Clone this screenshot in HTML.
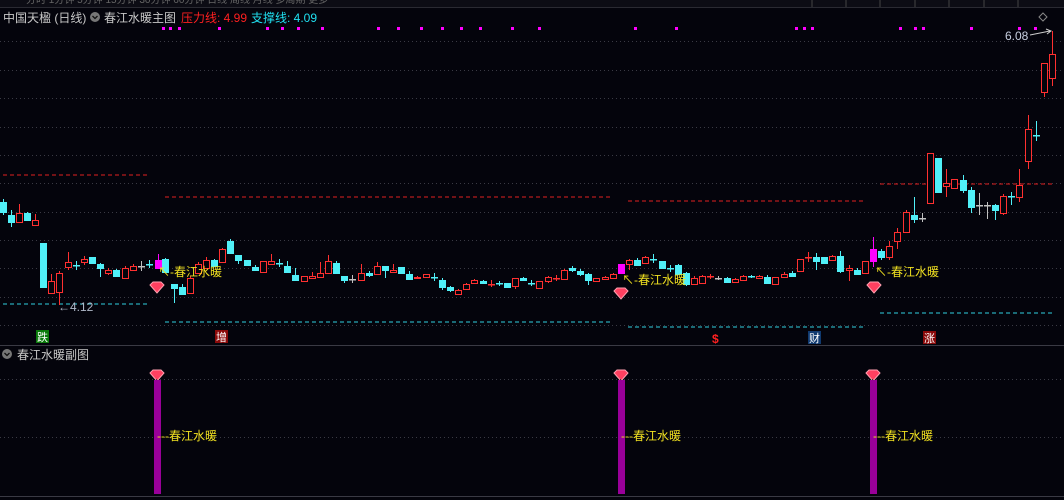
<!DOCTYPE html>
<html><head><meta charset="utf-8"><style>
body{margin:0;background:#04040c;width:1064px;height:500px;overflow:hidden;font-family:"Liberation Sans","Noto Sans CJK SC",sans-serif}
svg{position:absolute;left:0;top:0}
</style></head><body>
<svg id="s" width="1064" height="500" xmlns="http://www.w3.org/2000/svg" font-family="Liberation Sans, Noto Sans CJK SC, sans-serif">
<rect width="1064" height="500" fill="#04040c"/>
<!-- toolbar -->
<rect x="0" y="0" width="1064" height="7" fill="#0c0c14"/>
<line x1="0" y1="7.5" x2="1064" y2="7.5" stroke="#2a2a32"/>
<g fill="#666" font-size="10">
<text x="26" y="3">分时 1分钟 5分钟 15分钟 30分钟 60分钟 日线 周线 月线 多周期 更多</text>
</g>
<g stroke="#444"><line x1="812" y1="0" x2="812" y2="7"/><line x1="846" y1="0" x2="846" y2="7"/><line x1="880" y1="0" x2="880" y2="7"/><line x1="915" y1="0" x2="915" y2="7"/><line x1="949" y1="0" x2="949" y2="7"/><line x1="984" y1="0" x2="984" y2="7"/><line x1="1018" y1="0" x2="1018" y2="7"/></g>
<!-- header -->
<text x="3" y="22" font-size="12" fill="#c8c8c8">中国天楹 (日线)</text>
<circle cx="95" cy="17" r="5" fill="#777"/><path d="M92.5 16 L95 18.5 L97.5 16" stroke="#111" fill="none" stroke-width="1.3"/>
<text x="104" y="22" font-size="12" fill="#c8c8c8">春江水暖主图</text>
<text x="181" y="22" font-size="12" fill="#ff2020">压力线: 4.99</text>
<text x="251" y="22" font-size="12" fill="#20e0f0">支撑线: 4.09</text>
<path d="M1043 13 L1047 17 L1043 21 L1039 17 Z" stroke="#888" fill="none"/>
<g id="grid" stroke="#3a3a44" stroke-dasharray="1 3"></g>
<!-- level lines -->
<g stroke="#e02020" stroke-dasharray="4 3" stroke-width="1">
<line x1="3" y1="175" x2="150" y2="175"/><line x1="165" y1="197" x2="612" y2="197"/><line x1="628" y1="201" x2="865" y2="201"/><line x1="880" y1="184" x2="1052" y2="184"/></g>
<g stroke="#30d0e0" stroke-dasharray="4 3" stroke-width="1">
<line x1="3" y1="304" x2="150" y2="304"/><line x1="165" y1="322" x2="612" y2="322"/><line x1="628" y1="327" x2="865" y2="327"/><line x1="880" y1="313" x2="1052" y2="313"/></g>
<g id="c"></g>
<g id="dots" fill="#ff00ff"></g>
<text x="1005" y="40" font-size="12" fill="#c8d0e0">6.08</text>
<path d="M1030 35 L1050 31 M1046 29 L1051 31 L1047 34" stroke="#ccc" fill="none"/>
<text x="58" y="311" font-size="12" fill="#b0b8c8">←4.12</text>
<!-- markers -->
<g font-size="12" fill="#f0e020">
<text x="158" y="276">↖-春江水暖</text><text x="622" y="284">↖-春江水暖</text><text x="875" y="276">↖-春江水暖</text></g>
<g id="dm"></g>
<!-- labels -->
<rect x="36" y="330" width="13" height="13" fill="#0a7a0a"/><text x="37" y="341" font-size="11" fill="#fff">跌</text>
<rect x="215" y="330" width="13" height="13" fill="#8a0a0a"/><text x="216" y="341" font-size="11" fill="#fff">增</text>
<text x="712" y="343" font-size="12" fill="#ff2020" font-weight="bold">$</text>
<rect x="808" y="331" width="13" height="13" fill="#103a70"/><text x="809" y="342" font-size="11" fill="#fff">财</text>
<rect x="923" y="331" width="13" height="13" fill="#8a0a0a"/><text x="924" y="342" font-size="11" fill="#fff">涨</text>
<line x1="0" y1="345.5" x2="1064" y2="345.5" stroke="#3a3a44"/>
<circle cx="7" cy="354" r="5" fill="#777"/><path d="M4.5 353 L7 355.5 L9.5 353" stroke="#111" fill="none" stroke-width="1.3"/>
<text x="17" y="359" font-size="12" fill="#c8c8c8">春江水暖副图</text>
<g stroke="#3a3a44" stroke-dasharray="1 3"><line x1="0" y1="379.5" x2="1064" y2="379.5"/><line x1="0" y1="437.5" x2="1064" y2="437.5"/></g>
<g fill="#990099"><rect x="154" y="380" width="7" height="114"/><rect x="618" y="380" width="7" height="114"/><rect x="870" y="380" width="7" height="114"/></g>
<g font-size="12" fill="#f0e020"><text x="157" y="440">---春江水暖</text><text x="621" y="440">---春江水暖</text><text x="873" y="440">---春江水暖</text></g>
<line x1="0" y1="496.5" x2="1064" y2="496.5" stroke="#3a3a44"/>
</svg>
<script>
var NS="http://www.w3.org/2000/svg";
function el(p,t,a){var e=document.createElementNS(NS,t);for(var k in a)e.setAttribute(k,a[k]);p.appendChild(e);return e;}
var g=document.getElementById('grid');
[41,70,98,127,155,183,212,240,268,297,325].forEach(function(y){el(g,'line',{x1:0,y1:y+.5,x2:1064,y2:y+.5});});
var d=document.getElementById('dots');
[162,169,178,218,266,281,297,321,377,397,420,441,460,479,511,538,634,675,795,803,811,899,914,922,970,1018,1034].forEach(function(x){el(d,'rect',{x:x,y:27,width:3,height:3});});
var dm=document.getElementById('dm');
[[157,289],[621,295],[874,289],[157,377],[621,377],[873,377]].forEach(function(p){
 el(dm,'path',{d:'M'+(p[0]-7)+' '+(p[1]-4)+' L'+(p[0]-4)+' '+(p[1]-7)+' L'+(p[0]+4)+' '+(p[1]-7)+' L'+(p[0]+7)+' '+(p[1]-4)+' L'+p[0]+' '+(p[1]+4)+' Z',fill:'#ff4060',stroke:'#ffa0b0','stroke-width':1});});
// type,x,top,bottom,wickTop,wickBot ; r=red hollow, c=cyan, g=grey cross, m=magenta, x=cyan cross, R=red cross
var C=[
['c',0,202,212,199,215],['c',8,215,222,210,227],['r',16,213,222,204,222],['c',24,213,220,212,220],['r',32,220,225,214,225],
['c',40,243,287,243,287],['r',48,281,293,274,293],['r',56,273,292,271,305],['r',65,262,267,252,270],['x',73,265,265,261,270],['r',81,259,262,256,265],['c',89,257,263,257,263],['c',97,264,268,263,277],['r',105,270,273,268,275],['c',113,270,276,269,276],['r',122,268,278,266,279],['r',130,266,270,264,271],['g',138,266,266,261,271],['x',146,264,264,260,268],['m',155,260,268,254,268],['c',162,259,272,258,272],
['c',171,284,288,284,303],['c',179,287,294,284,294],['r',187,278,293,276,293],['r',195,264,273,262,273],['r',203,260,268,257,268],['c',211,260,266,259,266],['r',219,249,262,248,262],['c',227,241,253,239,253],['c',235,255,260,255,264],['c',244,260,265,260,266],['c',252,267,270,265,270],['r',260,261,272,261,273],['r',268,261,264,254,265],['x',276,263,263,259,267],['c',284,266,272,261,272],['c',292,275,280,268,280],['r',301,276,281,276,281],['r',309,276,278,272,279],['r',317,273,277,262,277],['r',325,261,273,255,274],['c',333,263,273,261,273],['c',341,276,280,276,283],['g',349,279,279,275,283],['r',358,273,280,264,280],['c',366,273,275,271,277],['r',374,266,274,262,274],['c',382,266,270,266,278],['r',390,270,272,264,272],['c',398,267,273,267,273],['c',406,274,279,271,279],['r',414,277,278,276,279],['r',423,274,277,274,278],['x',431,277,277,273,281],['c',439,280,287,278,290],['c',447,287,290,286,292],
['r',455,290,294,289,294],['r',463,284,289,283,289],['r',471,280,283,279,284],['c',480,281,283,280,284],['R',488,284,284,280,287],['x',496,283,283,281,286],['c',504,283,287,283,288],['r',512,278,286,278,289],['c',520,278,280,277,281],['x',528,283,283,280,286],['r',536,281,288,281,288],['r',545,277,281,276,283],['R',553,278,278,275,281],['r',561,270,279,269,279],['c',569,268,270,266,272],['c',577,271,274,269,276],['c',585,274,280,273,285],['r',593,278,281,278,282],['r',602,277,279,276,280],['r',610,274,278,273,278],['m',618,264,273,264,273],['r',626,260,264,259,270],['c',634,260,265,258,265],['r',642,257,263,256,263],['x',650,259,259,254,263],['c',659,261,268,261,268],['x',667,268,268,265,272],['c',675,265,274,264,275],['c',683,273,284,272,286],['r',691,278,284,276,285],['r',699,276,283,275,283],['R',707,276,276,274,279],['g',715,278,278,276,280],['c',724,278,282,277,282],['r',732,279,282,278,282],['r',740,276,280,275,280],['x',748,276,276,275,278],['r',756,276,278,275,278],['c',764,277,283,275,283],['r',772,277,284,277,284],['r',781,274,277,272,277],['c',789,273,276,271,277],['r',797,259,271,259,271],['R',805,257,257,252,262],['c',813,257,261,253,270],['c',821,257,263,257,263],['r',829,256,260,255,261],['c',837,256,271,251,273],['r',846,268,270,265,281],['c',854,270,274,268,274],['r',862,261,273,261,274],['m',870,249,261,237,267],['c',878,251,257,249,260],['r',886,246,257,241,260],['r',894,232,241,228,249],['r',903,212,232,210,232],['c',911,215,219,197,223],['g',919,218,218,213,222],
['r',927,153,203,153,203],['c',935,158,192,158,192],['r',943,183,186,169,197],['r',951,179,188,179,188],['c',960,180,190,175,193],['c',968,190,207,187,213],['g',976,205,205,193,215],['g',984,205,205,202,219],['c',992,205,210,204,220],['r',1000,196,213,194,215],['x',1008,196,196,192,205],['r',1016,185,197,169,202],['r',1025,129,161,115,169],['x',1033,135,135,121,141],['r',1041,63,92,63,97],['r',1049,54,78,31,86]];
var cg=document.getElementById('c');
var col={r:'#ff3030',c:'#50f0f8',g:'#c0c0c0',m:'#ff00ff',x:'#50f0f8',R:'#ff3030'};
C.forEach(function(k){var t=k[0],x=k[1],c=col[t],m=x+3.5;
 el(cg,'line',{x1:m,y1:k[4],x2:m,y2:k[5],stroke:(t=='m'?'#ff00ff':c)});
 var h=Math.max(1,k[3]-k[2]);
 if(t=='r')el(cg,'rect',{x:x+.5,y:k[2]+.5,width:6,height:h,fill:'#04040c',stroke:c});
 else if(t=='c'||t=='m')el(cg,'rect',{x:x,y:k[2],width:7,height:h+1,fill:c});
 else el(cg,'rect',{x:x,y:k[2],width:7,height:1.5,fill:c});
});
</script>
</body></html>
